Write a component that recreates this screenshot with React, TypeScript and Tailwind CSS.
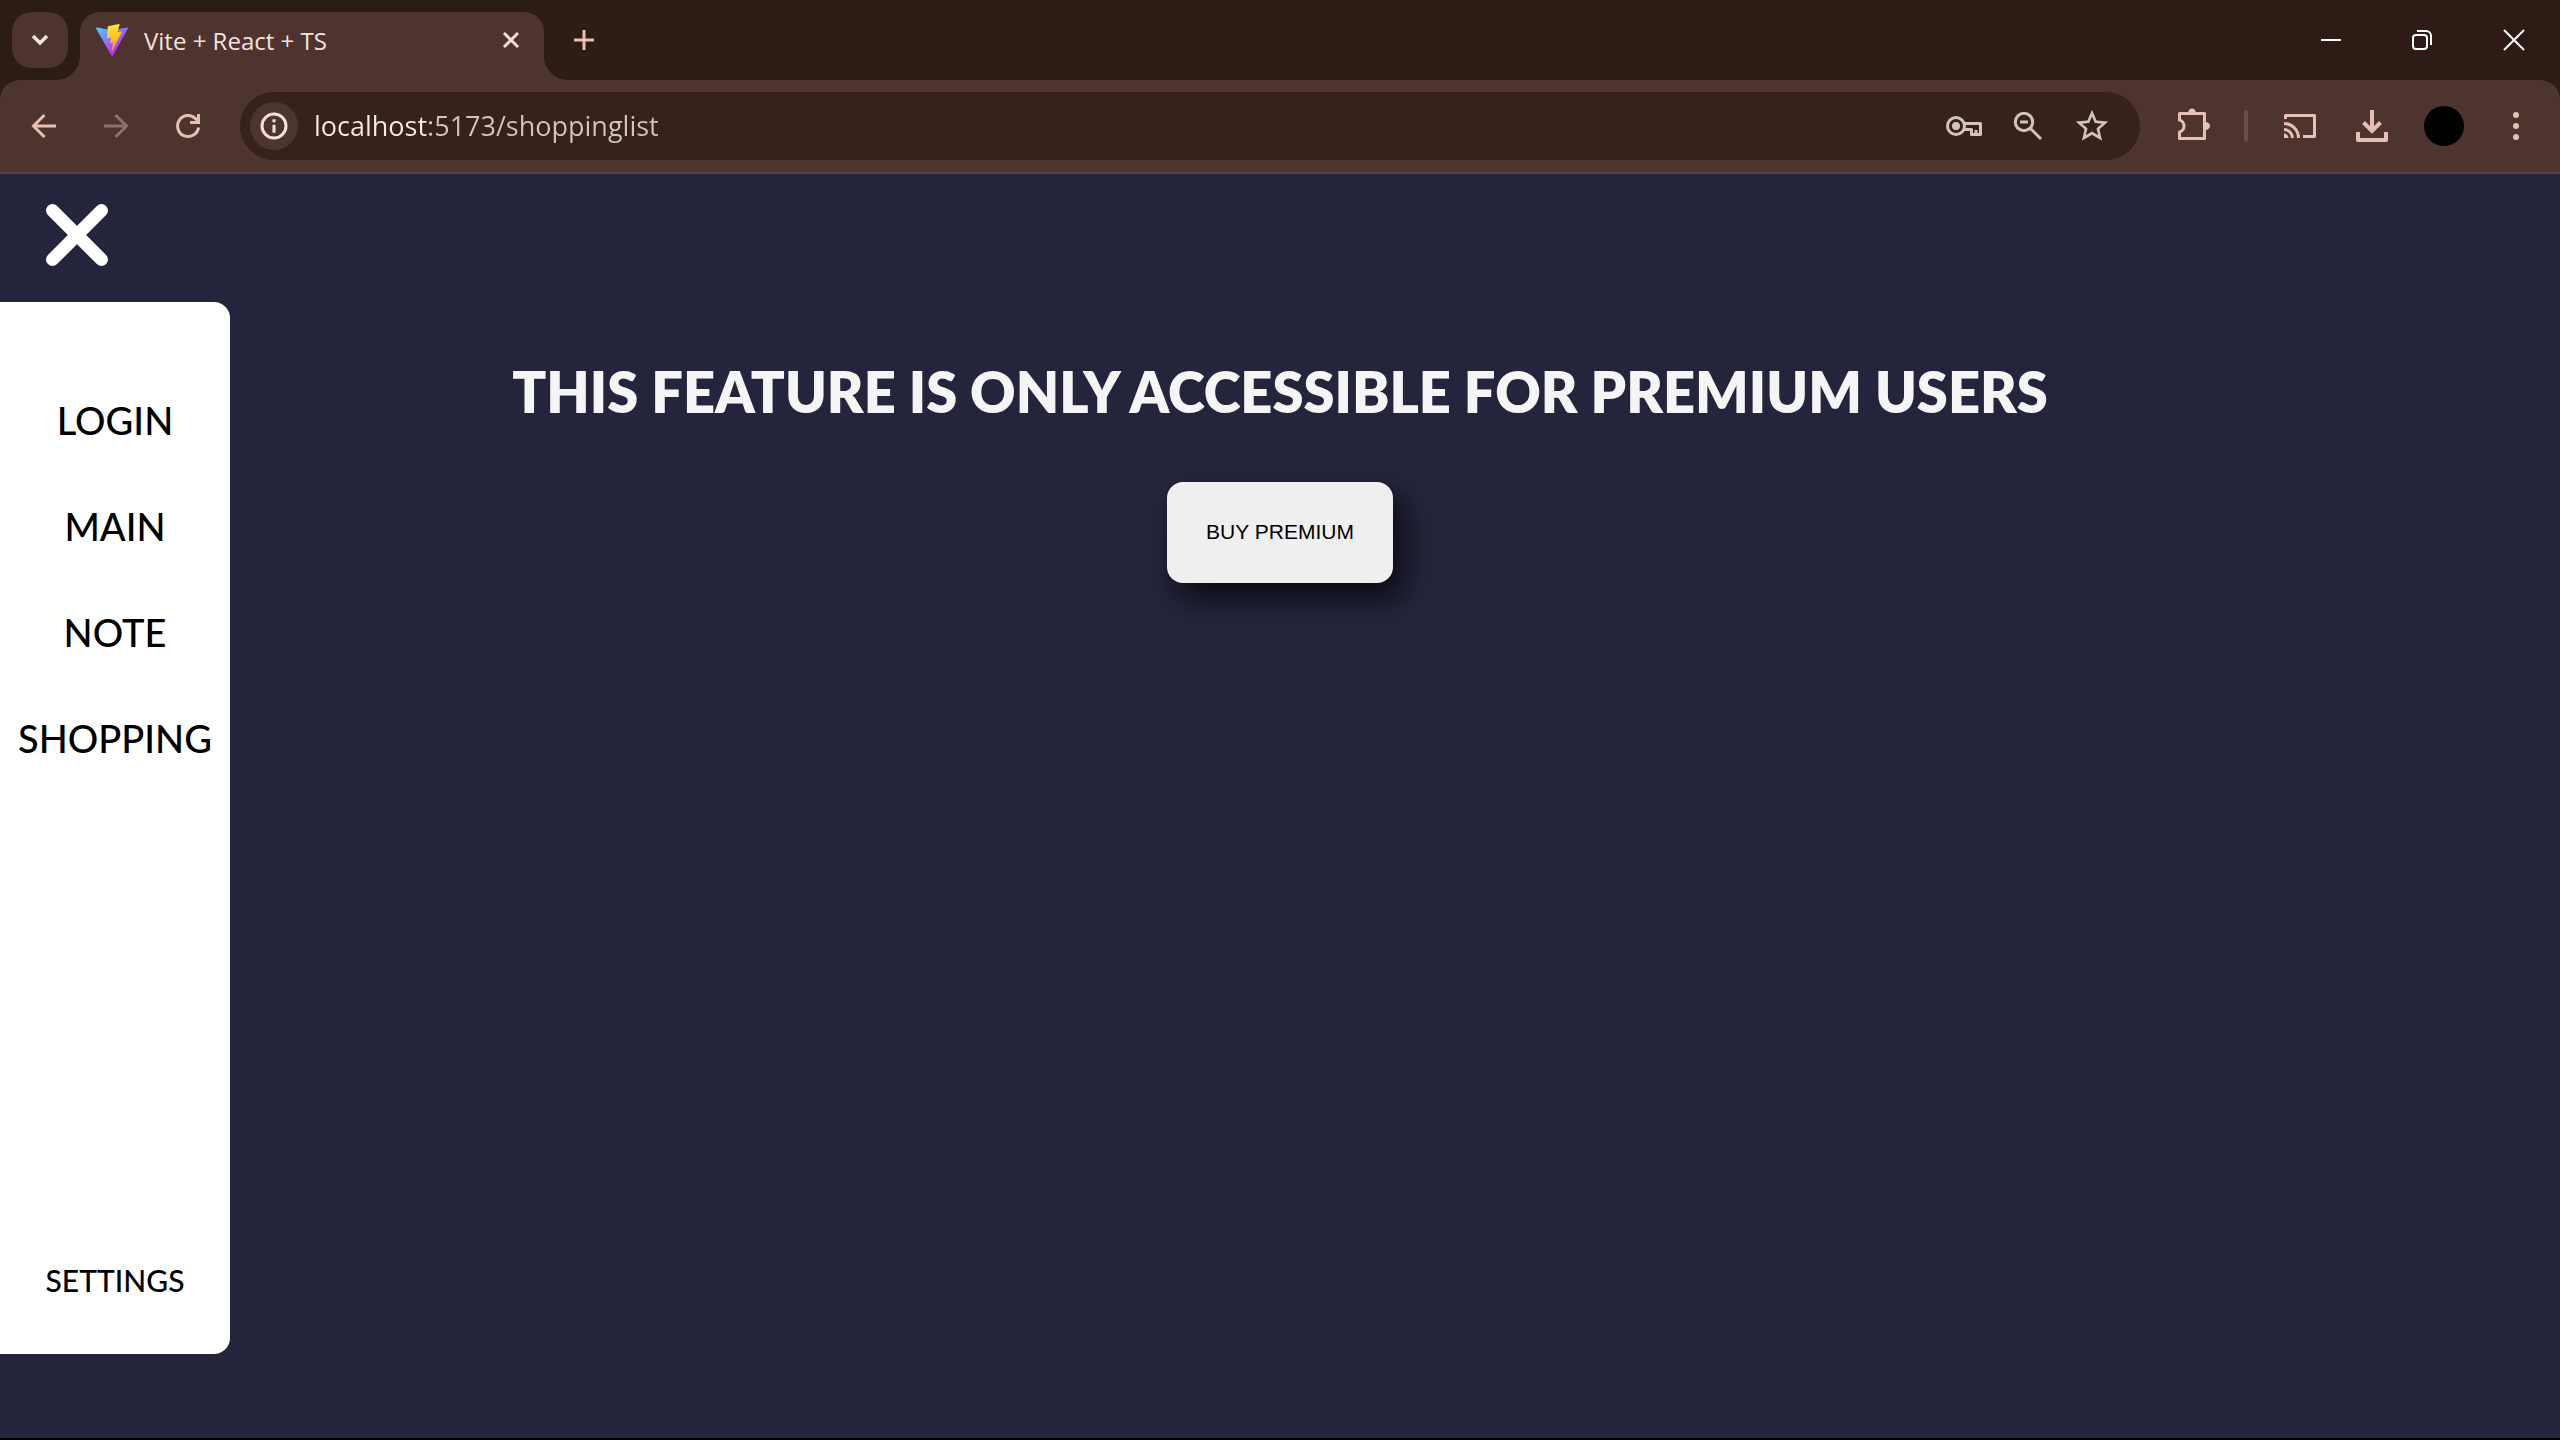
import React from "react";

type IconProps = { children: React.ReactNode; className?: string };

/* 36px icon canvas shared by the toolbar glyphs */
function Icon({ children, className = "" }: IconProps) {
  return (
    <svg
      viewBox="0 0 36 36"
      className={"size-9 shrink-0 " + className}
      fill="none"
      stroke="currentColor"
      strokeWidth="3"
      aria-hidden="true"
    >
      {children}
    </svg>
  );
}

function ViteLogo() {
  return (
    <svg viewBox="0 0 256 257" className="size-8 shrink-0" aria-hidden="true">
      <defs>
        <linearGradient id="va" x1="-.828%" x2="57.636%" y1="7.652%" y2="78.411%">
          <stop offset="0%" stopColor="#41D1FF" />
          <stop offset="100%" stopColor="#BD34FE" />
        </linearGradient>
        <linearGradient id="vb" x1="43.376%" x2="50.316%" y1="2.242%" y2="89.03%">
          <stop offset="0%" stopColor="#FFEA83" />
          <stop offset="8.333%" stopColor="#FFDD35" />
          <stop offset="100%" stopColor="#FFA800" />
        </linearGradient>
      </defs>
      <path
        fill="url(#va)"
        d="M255.153 37.938L134.897 252.976c-2.483 4.44-8.862 4.466-11.382.048L.875 37.958c-2.746-4.814 1.371-10.646 6.827-9.67l120.385 21.517a6.537 6.537 0 0 0 2.322-.004l117.867-21.483c5.438-.991 9.574 4.796 6.877 9.62Z"
      />
      <path
        fill="url(#vb)"
        d="M185.432.063L96.44 17.501a3.268 3.268 0 0 0-2.634 3.014l-5.474 92.456a3.268 3.268 0 0 0 3.997 3.378l24.777-5.718c2.318-.535 4.413 1.507 3.936 3.838l-7.361 36.047c-.495 2.426 1.782 4.5 4.151 3.78l15.304-4.649c2.372-.72 4.652 1.36 4.15 3.788l-11.698 56.621c-.732 3.542 3.979 5.473 5.943 2.437l1.313-2.028l72.516-144.72c1.215-2.423-.88-5.186-3.54-4.672l-25.505 4.922c-2.396.462-4.435-1.77-3.759-4.114l16.646-57.705c.677-2.35-1.37-4.583-3.769-4.113Z"
      />
    </svg>
  );
}

/* Concave corner joining the active tab to the toolbar */
function TabFoot({ flip = false }: { flip?: boolean }) {
  return (
    <svg
      viewBox="0 0 24 24"
      className={"size-6 shrink-0 self-end text-[#4e342e] " + (flip ? "-scale-x-100" : "")}
      fill="currentColor"
      aria-hidden="true"
    >
      <path d="M24 0v24H0A24 24 0 0 0 24 0Z" />
    </svg>
  );
}

function TabStrip() {
  return (
    <div className="flex h-20 items-center bg-[#2d1b16] pl-3">
      <button aria-label="Search tabs" className="grid size-14 place-items-center rounded-[20px] bg-[#4e342e] text-[#f5e2dc]">
        <Icon>
          <path strokeWidth="3.500" d="M11 14 18 21l7-7" />
        </Icon>
      </button>
      <div className="-ml-3 flex h-full">
        <TabFoot />
        <div className="mt-3 flex w-[464px] items-center rounded-t-[20px] bg-[#4e342e] pr-[14px] pb-3 pl-4">
          <ViteLogo />
          <span className="ml-4 flex-1 pt-[2px] text-2xl text-[#f5e2dc]">Vite + React + TS</span>
          <button aria-label="Close tab" className="text-[#f5e2dc]">
            <Icon>
              <path d="m10 11 14 14m0-14-14 14" />
            </Icon>
          </button>
        </div>
        <TabFoot flip />
      </div>
      <button aria-label="New tab" className="-ml-[2px] text-[#e6c0b4]">
        <Icon>
          <path d="M18 8v20M8 18h20" />
        </Icon>
      </button>
      <div className="ml-auto flex text-white">
        <button aria-label="Minimize" className="grid w-[92px] place-items-center">
          <Icon>
            <path strokeWidth="2" d="M9 18h20" />
          </Icon>
        </button>
        <button aria-label="Restore" className="grid w-[92px] place-items-center">
          <Icon>
            <g strokeWidth="2">
              <rect x="9" y="13" width="14" height="14" rx="3" />
              <path d="M13 9h9a5 5 0 0 1 5 5v9" />
            </g>
          </Icon>
        </button>
        <button aria-label="Close window" className="grid w-[92px] place-items-center">
          <Icon>
            <path strokeWidth="2" d="m8 8 20 20M28 8 8 28" />
          </Icon>
        </button>
      </div>
    </div>
  );
}

function Toolbar() {
  return (
    <div className="bg-[#2d1b16]">
      <div className="flex h-[94px] items-center rounded-t-[20px] border-b-2 border-[#54443f] bg-[#4e342e] px-[26px] text-[#e6c0b4]">
        <div className="flex gap-9">
          <button aria-label="Back">
            <Icon>
              <path d="M30 18H8M18.500 7 7.500 18l11 11" />
            </Icon>
          </button>
          <button aria-label="Forward" className="text-[#8d736c]">
            <Icon>
              <path d="M6 18h22M17.500 7l11 11-11 11" />
            </Icon>
          </button>
          <button aria-label="Reload">
            <Icon>
              <path d="M28.500 19.500A10.500 10.500 0 1 1 25.500 10.600L28 13" />
              <path d="M28.500 6v8.500H20" />
            </Icon>
          </button>
        </div>
        <div className="ml-[34px] flex h-[68px] flex-1 items-center rounded-full bg-[#36211b] pr-[30px] pl-[10px] text-[#d3c3be]">
          <button aria-label="Site information" className="grid size-12 place-items-center rounded-full bg-[#4e342e] text-[#f5e2dc]">
            <Icon>
              <circle cx="18" cy="18" r="12" />
              <path d="M18 16.700v8M18 11.300v3" />
            </Icon>
          </button>
          <input
            aria-label="Address"
            defaultValue="localhost:5173/shoppinglist"
            className="ml-4 min-w-0 flex-1 bg-[linear-gradient(90deg,#f9ece8_114px,#d3c3be_114px)] bg-clip-text text-[27px] text-transparent outline-none"
          />
          <div className="flex gap-7">
            <button aria-label="Passwords">
              <Icon>
                <circle cx="10" cy="18" r="8.500" />
                <circle cx="10" cy="18" r="4" fill="currentColor" stroke="none" />
                <path strokeLinejoin="round" d="M18 15.500h16.500v11h-9v-5H18M30 22v4" />
              </Icon>
            </button>
            <button aria-label="Zoom">
              <Icon>
                <circle cx="14" cy="14" r="8.700" />
                <path d="M20.500 20.500 31 31M10 14h8" />
              </Icon>
            </button>
            <button aria-label="Bookmark this tab">
              <Icon>
                <path
                  fill="currentColor"
                  stroke="none"
                  transform="translate(-1.56 -1.5) scale(1.63)"
                  d="M22 9.240l-7.190-.620L12 2 9.190 8.630 2 9.240l5.460 4.730L5.820 21 12 17.270 18.180 21l-1.630-7.030L22 9.240zM12 15.400l-3.760 2.270 1-4.280-3.320-2.880 4.380-.380L12 6.100l1.710 4.040 4.380.380-3.320 2.880 1 4.280L12 15.400z"
                />
              </Icon>
            </button>
          </div>
        </div>
        <div className="ml-9 flex items-center">
          <button aria-label="Extensions">
            <Icon>
              <path
                strokeLinejoin="round"
                d="M3.500 5.500h25v25h-25v-6.500C6 23.500 8 21 8 18s-2-5.500-4.500-6Z"
              />
              <g fill="currentColor" stroke="none">
                <path d="M12 5a4 4.500 0 0 1 8 0Z" />
                <path d="M29.500 14a4.500 4 0 0 1 0 8Z" />
              </g>
            </Icon>
          </button>
          <span className="mr-[34px] ml-8 h-8 w-1 rounded-full bg-[#6d4f47]" />
          <button aria-label="Cast">
            <Icon>
              <path strokeLinejoin="round" d="M3.500 11V7.500h29v21H21" />
              <path d="M2 15.500A14.500 14.500 0 0 1 16.500 30M2 21.500a8.500 8.500 0 0 1 8.500 8.500" />
              <path fill="currentColor" stroke="none" d="M2 25.500a4.500 4.500 0 0 1 4.500 4.500H2Z" />
            </Icon>
          </button>
          <button aria-label="Downloads" className="ml-9">
            <Icon>
              <g strokeWidth="4">
                <path d="M18 2v20M9.500 14.500 18 23l8.500-8.500" />
                <path strokeLinejoin="round" d="M4 24v8h28v-8" />
              </g>
            </Icon>
          </button>
          <button aria-label="Profile" className="ml-[34px] size-10 rounded-full bg-black" />
          <button aria-label="Menu" className="ml-[34px]">
            <Icon>
              <g fill="currentColor" stroke="none">
                <circle cx="18" cy="7" r="3" />
                <circle cx="18" cy="18" r="3" />
                <circle cx="18" cy="29" r="3" />
              </g>
            </Icon>
          </button>
        </div>
      </div>
    </div>
  );
}

const links = ["LOGIN", "MAIN", "NOTE", "SHOPPING"];

export default function App() {
  return (
    <div className="flex min-h-screen flex-col border-b-2 border-black bg-[#24243c] font-['Open_Sans',sans-serif]">
      <TabStrip />
      <Toolbar />
      <div className="grid flex-1 grid-cols-[1fr_auto_1fr] font-['Lato',sans-serif]">
        <div className="flex flex-col items-start pb-[84px]">
          <button aria-label="Close menu" className="mt-[30px] mb-9 ml-[46px] text-white">
            <svg viewBox="0 0 62 62" className="size-[62px]" stroke="currentColor" strokeWidth="13" strokeLinecap="round" aria-hidden="true">
              <path d="m6.500 6.500 49 49m0-49-49 49" />
            </svg>
          </button>
          <nav className="flex w-[230px] flex-1 flex-col items-center rounded-r-2xl bg-white pt-[90px] pb-[46px] font-medium text-black">
            {links.map((l) => (
              <a key={l} href="#" className="mb-[50px] text-[38px] leading-14">{l}</a>
            ))}
            <a href="#" className="mt-auto text-[30px] leading-14">SETTINGS</a>
          </nav>
        </div>
        <main className="flex flex-col items-center pt-[178px]">
          <h1 className="text-[56px] leading-[80px] font-extrabold text-[#f5f5f5]">
            THIS FEATURE IS ONLY ACCESSIBLE FOR PREMIUM USERS
          </h1>
          <button className="mt-[50px] rounded-2xl bg-[#efefef] px-[39px] pt-[37px] pb-[39px] font-['Liberation_Sans',sans-serif] text-[21px] leading-[25px] text-black shadow-[10px_15px_30px_rgba(0,0,0,0.7)]">
            BUY PREMIUM
          </button>
        </main>
      </div>
    </div>
  );
}
